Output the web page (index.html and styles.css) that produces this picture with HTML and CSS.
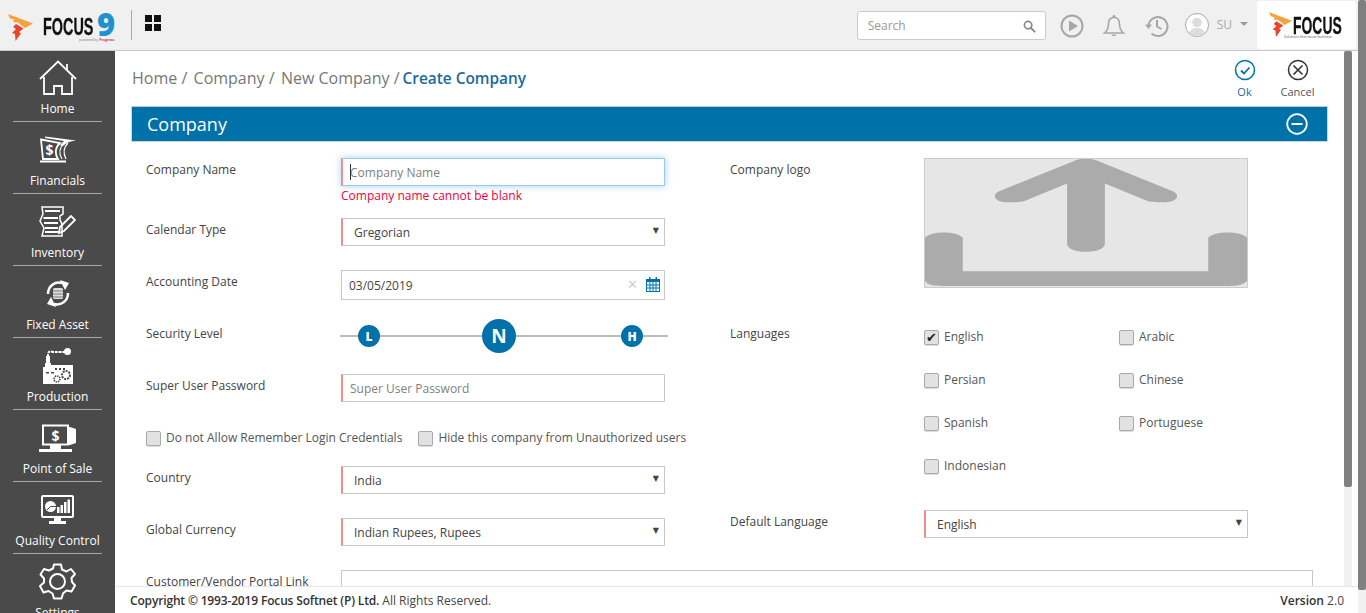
FILE: index.html
```html
<!DOCTYPE html>
<html lang="en">
<head>
    <meta charset="UTF-8">
    <title>Create Company</title>
    <link rel="stylesheet" href="styles.css">
</head>
<body>
<div class="page">
    <header class="topbar">
        <div class="brand">
            <svg class="flame" viewBox="0 0 25 27"><path fill="#f5a23c" d="M0 0L25 9.500L17 14L10 8.500L5 8L6 5.500L2 4.500Z"/><path fill="#e8452a" d="M8 10L15.500 14.500L11 18L13 19.500L7.500 27L7 20L4 19L8 15L5 13Z"/></svg>
            <span class="wordmark">FOCUS</span>
            <span class="nine">9</span>
            <span class="powered">powered by <b>Progress</b></span>
        </div>
        <div class="top-divider"></div>
        <div class="grid-icon"><i></i><i></i><i></i><i></i></div>
        <div class="top-right">
            <div class="search">
                <input type="text" placeholder="Search">
                <svg viewBox="0 0 14 14" width="13" height="13"><circle cx="5.500" cy="5.500" r="4" fill="none" stroke="#888" stroke-width="1.800"/><path d="M8.500 8.500L12.500 12.500" stroke="#888" stroke-width="2.200" stroke-linecap="round"/></svg>
            </div>
            <svg class="top-icon play" viewBox="0 0 24 24" width="24" height="24"><circle cx="12" cy="12" r="10.500" fill="none" stroke="#a6a6a6" stroke-width="2"/><path fill="#a6a6a6" d="M9 6.500L18 12L9 17.500Z"/></svg>
            <svg class="top-icon bell" viewBox="0 0 24 24" width="24" height="24"><path fill="none" stroke="#a6a6a6" stroke-width="1.600" d="M12 3.500C8 3.500 6.500 6.500 6.500 10C6.500 15 5 17 2.500 19H21.500C19 17 17.500 15 17.500 10C17.500 6.500 16 3.500 12 3.500Z"/><circle cx="12" cy="2.500" r="1.500" fill="#a6a6a6"/><path fill="#a6a6a6" d="M9.500 20.500H14.500C14 22.500 10 22.500 9.500 20.500Z"/></svg>
            <svg class="top-icon history" viewBox="0 0 24 24" width="24" height="24"><path fill="none" stroke="#a6a6a6" stroke-width="2" d="M3.500 12A9.500 9.500 0 1 1 6.500 19.500"/><path fill="#a6a6a6" d="M0 10.500H7L3.500 15Z"/><path fill="none" stroke="#a6a6a6" stroke-width="2" d="M12 6V12.500L16.500 15"/></svg>
            <div class="avatar"><svg viewBox="0 0 22 22" width="22" height="22"><circle cx="11" cy="8.500" r="4.800" fill="#ddd"/><path fill="#ddd" d="M3 20C4 14.500 8 14 11 14C14 14 18 14.500 19 20L11 22Z"/></svg></div>
            <span class="user">SU</span>
            <span class="user-caret"></span>
            <div class="brand-box">
                <svg class="flame-small" viewBox="0 0 25 27"><path fill="#f5a23c" d="M0 0L25 9.500L17 14L10 8.500L5 8L6 5.500L2 4.500Z"/><path fill="#e8452a" d="M8 10L15.500 14.500L11 18L13 19.500L7.500 27L7 20L4 19L8 15L5 13Z"/></svg>
                <span class="wordmark wordmark-small">FOCUS</span>
                <span class="tagline">Solutions that move business</span>
            </div>
        </div>
    </header>

    <div class="body-row">
        <nav class="sidebar">
            <a class="nav-item">
                <span class="nav-icon"><svg viewBox="0 0 38 36" width="38" height="36" fill="none" stroke="#fff" stroke-width="1.800"><path d="M1 19L19 1.500L37 19"/><path d="M28 10V4"/><path d="M5 17V34H15V26H23V34H33V17"/></svg></span>
                <span class="nav-label">Home</span>
            </a>
            <a class="nav-item">
                <span class="nav-icon"><svg viewBox="0 0 36 27" width="36" height="27"><path fill="#fff" d="M5 .5L36 4.500C30 5 26 7 23 10L20 9L24 5L5 2Z"/><path fill="none" stroke="#fff" stroke-width="1.800" d="M1 3.500L20 7C15 12 15 18 18 23H3Z"/><path fill="none" stroke="#fff" stroke-width="1.200" d="M24 7C19 12 19 18 22 23M28 7C24 11 23 17 26 23"/><rect y="24.500" width="26" height="2" fill="#fff"/><text x="5.500" y="18.500" class="nav-dollar">$</text></svg></span>
                <span class="nav-label">Financials</span>
            </a>
            <a class="nav-item">
                <span class="nav-icon"><svg viewBox="0 0 37 31" width="37" height="31" fill="none" stroke="#fff" stroke-width="1.500"><path d="M3 1H24V8L21 10V14L23 18V30H3L5 22L1 15L4 8Z"/><path stroke-width="2.200" d="M6 5H21M4.500 12H19M5 17H19M6 22H19M6 26H20"/><path stroke-width="1.800" d="M20 27L21 21L32 10L36 14L25 25Z"/></svg></span>
                <span class="nav-label">Inventory</span>
            </a>
            <a class="nav-item">
                <span class="nav-icon"><svg viewBox="0 0 24 27" width="24" height="27" fill="none" stroke="#fff"><path stroke-width="2.500" d="M2 14C2 6 9 1 16 3"/><path fill="#fff" stroke="none" d="M14 0L23 3L19 10Z"/><path stroke-width="2.500" d="M22 13C22 21 15 26 8 24"/><path fill="#fff" stroke="none" d="M10 27L1 24L5 17Z"/><rect x="7" y="8" width="10" height="11" rx="1.500" fill="#ddd" stroke="none"/><path stroke="#666" stroke-width=".8" d="M7 11H17M7 14H17M7 17H17"/></svg></span>
                <span class="nav-label">Fixed Asset</span>
            </a>
            <a class="nav-item">
                <span class="nav-icon"><svg viewBox="0 0 30 36" width="30" height="36"><path fill="none" stroke="#fff" stroke-width="2" stroke-dasharray="3 .8" d="M5 9V6C5 3 8 3 10 4H22"/><rect x="3" y="8" width="4" height="9" fill="#fff"/><circle cx="24.500" cy="3.500" r="3.500" fill="#fff"/><path fill="#fff" d="M2 15H8V17H30V36H0V19H2Z"/><g fill="#4a4a4a"><rect x="12" y="20" width="2" height="2"/><rect x="16" y="20" width="2" height="2"/><rect x="20" y="20" width="2" height="2"/><rect x="3" y="24" width="3" height="1.500"/><rect x="8" y="24" width="3" height="1.500"/></g><circle cx="23" cy="27" r="4" fill="none" stroke="#4a4a4a" stroke-width="2" stroke-dasharray="2 1"/><circle cx="14" cy="31" r="3" fill="none" stroke="#4a4a4a" stroke-width="1.500" stroke-dasharray="1.500 .8"/></svg></span>
                <span class="nav-label">Production</span>
            </a>
            <a class="nav-item">
                <span class="nav-icon"><svg viewBox="0 0 37 28" width="37" height="28"><path fill="#fff" d="M28 3H31L37 5V19L31 21H28Z"/><rect x="4" y="1.500" width="25" height="19" fill="#4a4a4a" stroke="#fff" stroke-width="2"/><path fill="#fff" d="M11 21H22V25H33V28H0V25H11Z"/><text x="16.500" y="16.500" class="nav-dollar nav-dollar-pos">$</text></svg></span>
                <span class="nav-label">Point of Sale</span>
            </a>
            <a class="nav-item">
                <span class="nav-icon"><svg viewBox="0 0 33 29" width="33" height="29"><rect x="1" y="1" width="31" height="21" rx="1" fill="none" stroke="#fff" stroke-width="2"/><path fill="#fff" d="M13 23H20V26H25V29H8V26H13Z"/><circle cx="9.500" cy="11.500" r="5.500" fill="#fff"/><path stroke="#4a4a4a" d="M9.500 11.500H15M9.500 11.500L6 15" fill="none"/><g fill="#fff"><rect x="16" y="12" width="2.500" height="6"/><rect x="19.500" y="10" width="2.500" height="8"/><rect x="23" y="7" width="2.500" height="11"/><rect x="26.500" y="4.500" width="2.500" height="13.500"/></g></svg></span>
                <span class="nav-label">Quality Control</span>
            </a>
            <a class="nav-item">
                <span class="nav-icon"><svg viewBox="0 0 37 37" width="37" height="37" fill="none" stroke="#fff" stroke-width="2"><circle cx="18.500" cy="18.500" r="7.500"/><path d="M15 1.500H22L23 6.500L27.500 8.500L32 6L36 11L32.500 15L33 19L36 22.500L32.500 28.500L27.500 27.500L24 30.500L22.500 35.500H15L13.500 30.500L9.500 28L4.500 29.500L1 23L5 19.500V15.500L1.500 11.500L5 6L10 7.500L14 5.500Z" stroke-linejoin="round"/></svg></span>
                <span class="nav-label">Settings</span>
            </a>
        </nav>

        <div class="main-col">
            <div class="main-row">
                <main class="content">
                    <div class="toolbar">
                        <div class="crumbs">
                            <span>Home /</span><span>Company /</span><span>New Company /</span><strong>Create Company</strong>
                        </div>
                        <div class="actions">
                            <a class="action ok">
                                <svg viewBox="0 0 22 22" width="22" height="22" fill="none" stroke="#0073aa"><circle cx="11" cy="11" r="9.500" stroke-width="1.500"/><path stroke-width="1.800" d="M7 11.500L10 14.500L15.500 8.500"/></svg>
                                <span>Ok</span>
                            </a>
                            <a class="action cancel">
                                <svg viewBox="0 0 22 22" width="22" height="22" fill="none" stroke="#333"><circle cx="11" cy="11" r="9.500" stroke-width="1.500"/><path stroke-width="1.600" d="M6.500 6.500L15.500 15.500M15.500 6.500L6.500 15.500"/></svg>
                                <span>Cancel</span>
                            </a>
                        </div>
                    </div>

                    <section class="panel">
                        <div class="panel-head">
                            <h2>Company</h2>
                            <svg viewBox="0 0 22 22" width="22" height="22" fill="none" stroke="#fff" stroke-width="1.800"><circle cx="11" cy="11" r="9.800"/><path d="M5.500 11H16.500" stroke-width="2"/></svg>
                        </div>
                        <form class="panel-body">
                            <div class="columns">
                                <div class="col">
                                    <div class="row row-tight">
                                        <label>Company Name</label>
                                        <div class="field">
                                            <div class="caret-wrap">
                                                <input class="input required focused" type="text" placeholder="Company Name">
                                                <span class="caret"></span>
                                            </div>
                                            <div class="error">Company name cannot be blank</div>
                                        </div>
                                    </div>
                                    <div class="row">
                                        <label>Calendar Type</label>
                                        <div class="field select-wrap"><select class="input required select"><option>Gregorian</option></select></div>
                                    </div>
                                    <div class="row row-date">
                                        <label>Accounting Date</label>
                                        <div class="field date-box">
                                            <span class="date-value">03/05/2019</span>
                                            <span class="date-clear">✕</span>
                                            <svg viewBox="0 0 14 15" width="14" height="15"><path fill="#0073aa" d="M0 2H3V0H4.500V2H9.500V0H11V2H14V15H0ZM1 5V14H13V5Z"/><path stroke="#0073aa" d="M1 8H13M1 11H13M4 5V14M7 5V14M10 5V14"/></svg>
                                        </div>
                                    </div>
                                    <div class="row">
                                        <label>Security Level</label>
                                        <div class="slider">
                                            <span class="knob">L</span>
                                            <span class="knob knob-active">N</span>
                                            <span class="knob">H</span>
                                        </div>
                                    </div>
                                    <div class="row">
                                        <label>Super User Password</label>
                                        <div class="field"><input class="input required" type="text" placeholder="Super User Password"></div>
                                    </div>
                                    <div class="row row-checks">
                                        <label class="check"><span class="box"></span>Do not Allow Remember Login Credentials</label>
                                        <label class="check"><span class="box"></span>Hide this company from Unauthorized users</label>
                                    </div>
                                    <div class="row">
                                        <label>Country</label>
                                        <div class="field select-wrap"><select class="input required select"><option>India</option></select></div>
                                    </div>
                                    <div class="row">
                                        <label>Global Currency</label>
                                        <div class="field select-wrap"><select class="input required select"><option>Indian Rupees, Rupees</option></select></div>
                                    </div>
                                </div>

                                <div class="col col-right">
                                    <div class="row row-logo">
                                        <label>Company logo</label>
                                        <div class="logo-drop">
                                            <svg viewBox="0 0 324 130" preserveAspectRatio="none" width="322" height="128"><g fill="#ababab"><path d="M150 2C156 -1 168 -1 174 2L250 33C257 37 254 44 240 44C232 44 227 44 222 42L181 25V86C181 97 143 97 143 86V25L102 42C97 44 92 44 84 44C70 44 67 37 74 33Z"/><path d="M0 80C6 73 32 73 38 80V114H285V80C291 73 318 73 324 80V124C320 128 315 129 305 129H18C8 129 3 128 0 124Z"/></g></svg>
                                        </div>
                                    </div>
                                    <div class="row row-langs">
                                        <label>Languages</label>
                                        <div class="lang-grid">
                                            <label class="check"><span class="box checked">✔</span>English</label>
                                            <label class="check"><span class="box"></span>Arabic</label>
                                            <label class="check"><span class="box"></span>Persian</label>
                                            <label class="check"><span class="box"></span>Chinese</label>
                                            <label class="check"><span class="box"></span>Spanish</label>
                                            <label class="check"><span class="box"></span>Portuguese</label>
                                            <label class="check"><span class="box"></span>Indonesian</label>
                                        </div>
                                    </div>
                                    <div class="row">
                                        <label>Default Language</label>
                                        <div class="field select-wrap"><select class="input required select"><option>English</option></select></div>
                                    </div>
                                </div>
                            </div>
                            <div class="row row-portal">
                                <label>Customer/Vendor Portal Link</label>
                                <div class="field portal-field"><input class="input" type="text"></div>
                            </div>
                        </form>
                    </section>
                </main>
                <div class="scroll inner-scroll"><div class="thumb"></div></div>
            </div>
            <footer class="footer">
                <span><b class="copy">Copyright © 1993-2019 Focus Softnet (P) Ltd.</b> All Rights Reserved.</span>
                <span><b>Version</b> 2.0</span>
            </footer>
        </div>
    </div>
</div>
<div class="scroll outer-scroll"><div class="thumb"></div></div>
</body>
</html>
```

FILE: styles.css
```css
* {
    box-sizing: border-box;
}
html, body {
    height: 100%;
}
body {
    margin: 0;
    display: flex;
    overflow: hidden;
    font-family: "Open Sans", Arial, sans-serif;
    font-size: 12px;
    color: #444;
    background: #fff;
}
.page {
    flex: 1;
    min-width: 0;
    height: 100%;
    display: flex;
    flex-direction: column;
}

/* top bar */
.topbar {
    height: 51px;
    flex: none;
    display: flex;
    align-items: center;
    background: #f0f0f0;
    border-bottom: 1px solid #c9c9c9;
}
.brand {
    position: relative;
    width: 131px;
    height: 50px;
    display: flex;
    align-items: center;
    padding-left: 8px;
}
.flame {
    width: 25px;
    height: 27px;
    margin-top: 5px;
    flex: none;
}
.wordmark {
    display: inline-block;
    font-family: "Liberation Sans", Arial, sans-serif;
    font-weight: 700;
    font-size: 24px;
    line-height: 20px;
    color: #111;
    -webkit-text-stroke: .3px #111;
    transform: scaleX(.6);
    transform-origin: left center;
    margin-left: 10px;
    margin-right: -33px;
    margin-top: 3px;
}
.nine {
    font-family: "Open Sans", sans-serif;
    font-weight: 800;
    font-size: 31px;
    line-height: 24px;
    color: #1d92cf;
    margin-left: 3px;
    margin-top: -2px;
}
.powered {
    position: absolute;
    left: 79px;
    top: 37px;
    font-size: 3.500px;
    white-space: nowrap;
    color: #777;
}
.powered b {
    color: #e0304a;
}
.top-divider {
    width: 1px;
    height: 30px;
    background: #aaa;
}
.grid-icon {
    margin-left: 13px;
    margin-top: -4px;
    display: grid;
    grid-template-columns: 7px 7px;
    gap: 2px;
}
.grid-icon i {
    width: 7px;
    height: 7px;
    background: #111;
}
.top-right {
    margin-left: auto;
    margin-right: 2px;
    display: flex;
    align-items: center;
    height: 50px;
}
.search {
    width: 189px;
    height: 29px;
    display: flex;
    align-items: center;
    padding: 0 9px 0 10px;
    background: #fff;
    border: 1px solid #ccc;
    border-radius: 3px;
}
.search input {
    flex: 1;
    min-width: 0;
    border: 0;
    outline: 0;
    padding: 0;
    font: 12px "Open Sans", sans-serif;
}
.search input::placeholder {
    color: #999;
}
.search svg {
    margin-top: 2px;
}
.top-icon {
    margin-top: 1px;
    flex: none;
}
.play {
    margin-left: 14px;
}
.bell {
    margin-left: 18px;
}
.history {
    margin-left: 19px;
}
.avatar {
    width: 24px;
    height: 24px;
    margin-left: 16px;
    margin-top: -1px;
    border: 1px solid #aaa;
    border-radius: 50%;
    background: #fff;
    overflow: hidden;
}
.avatar svg {
    display: block;
}
.user {
    margin-left: 8px;
    margin-top: -2px;
    color: #aaa;
    font-size: 12px;
}
.user-caret {
    margin-left: 8px;
    margin-top: -2px;
    border-left: 4px solid transparent;
    border-right: 4px solid transparent;
    border-top: 4px solid #999;
}
.brand-box {
    position: relative;
    width: 99px;
    height: 48px;
    margin-left: 9px;
    background: #fff;
    border-radius: 3px;
    display: flex;
    align-items: center;
    padding-left: 12px;
}
.flame-small {
    width: 23px;
    height: 25px;
    margin-top: -2px;
    flex: none;
}
.wordmark-small {
    font-size: 24px;
    line-height: 18px;
    margin-left: 1px;
    margin-top: 1px;
    transform: scaleX(.58);
}
.tagline {
    position: absolute;
    left: 27px;
    top: 33px;
    font-size: 3.500px;
    white-space: nowrap;
    color: #555;
}

.body-row {
    flex: 1;
    min-height: 0;
    display: flex;
}

/* sidebar */
.sidebar {
    width: 115px;
    flex: none;
    overflow: hidden;
    background: #4a4a4a;
}
.nav-item {
    display: block;
    height: 72px;
    margin: 0 13px;
    border-bottom: 1px solid #a8a8a8;
    color: #fff;
    text-align: center;
}
.nav-item:first-child {
    height: 71px;
}
.nav-item:first-child .nav-icon {
    height: 50px;
    padding-top: 4px;
}
.nav-item:first-child .nav-label {
    margin-top: 0;
}
.nav-icon {
    display: flex;
    align-items: center;
    justify-content: center;
    height: 50px;
    padding-top: 5px;
}
.nav-label {
    display: block;
    line-height: 16px;
    font-size: 12px;
    margin: 1px -10px 0;
    white-space: nowrap;
}
.nav-dollar {
    font: 700 14px "Open Sans", sans-serif;
    fill: #fff;
}
.nav-dollar-pos {
    text-anchor: middle;
}

/* main area */
.main-col {
    flex: 1;
    min-width: 0;
    display: flex;
    flex-direction: column;
}
.main-row {
    flex: 1;
    min-height: 0;
    display: flex;
}
.content {
    flex: 1;
    min-width: 0;
    overflow: hidden;
    padding: 0 16px;
}
.toolbar {
    height: 55px;
    display: flex;
    justify-content: space-between;
}
.crumbs {
    display: flex;
    align-items: baseline;
    gap: 5px;
    padding: 16px 0 0 1px;
    font-size: 16px;
    line-height: 22px;
    color: #777;
}
.crumbs span {
    margin-right: 1.300px;
}
.crumbs span:last-of-type {
    margin-right: -2px;
}
.crumbs strong {
    font-size: 15.400px;
    font-weight: 600;
    color: #1b6b9e;
}
.actions {
    display: flex;
    margin-right: 4px;
    padding-top: 8px;
}
.action {
    width: 53px;
    display: flex;
    flex-direction: column;
    align-items: center;
    font-size: 11px;
    line-height: 14px;
    color: #555;
}
.action span {
    margin-top: 4px;
}
.ok span {
    color: #1b6b9e;
}

.panel-head {
    height: 36px;
    display: flex;
    align-items: center;
    justify-content: space-between;
    padding: 0 19px 0 15px;
    background: #0071a9;
    border: 1px solid #d5d5d5;
    border-top-color: #c9c9c9;
    color: #fff;
}
.panel-head h2 {
    margin: 0;
    font-size: 18px;
    font-weight: 400;
}
.panel-body {
    padding: 16px 15px 0;
}
.columns {
    display: flex;
    gap: 65px;
}
.col {
    width: 519px;
    flex: none;
}
.col-right {
    width: 518px;
}
.row {
    display: flex;
    margin-bottom: 24px;
    min-height: 28px;
}
.row > label:not(.check) {
    width: 195px;
    flex: none;
    line-height: 24px;
    color: #444;
}
.col-right .row > label:not(.check) {
    width: 194px;
}
.field {
    flex: 1;
    min-width: 0;
}
.row-tight {
    margin-bottom: 0;
    height: 60px;
}
.input {
    display: block;
    width: 100%;
    height: 28px;
    padding: 0 8px;
    border: 1px solid #c8c8c8;
    border-radius: 0;
    background: #fff;
    outline: 0;
    font: 12px "Open Sans", sans-serif;
    color: #444;
}
.input::placeholder {
    color: #808080;
}
.required {
    border-left: 2px solid #f58c8c;
    padding-left: 7px;
}
.focused {
    border-color: #9cc9ea;
    border-left-color: #f58c8c;
    box-shadow: 0 0 7px rgba(102, 175, 233, .6);
}
.caret-wrap {
    position: relative;
}
.caret {
    position: absolute;
    left: 9px;
    top: 6px;
    width: 1px;
    height: 16px;
    background: #333;
}
.error {
    margin-top: 1px;
    line-height: 17px;
    color: #f2003c;
}
.select {
    appearance: none;
    padding-left: 11px;
}
.select-wrap {
    position: relative;
}
.select-wrap::after {
    content: "▼";
    position: absolute;
    right: 6px;
    top: 6px;
    font-size: 8px;
    line-height: 14px;
    color: #444;
    font-family: "DejaVu Sans", sans-serif;
}
.row-date {
    margin-bottom: 22px;
}
.date-box {
    display: flex;
    align-items: center;
    height: 30px;
    padding: 0 4px 0 7px;
    border: 1px solid #c8c8c8;
}
.date-value {
    flex: 1;
}
.date-clear {
    margin-right: 8px;
    margin-top: -2px;
    font-size: 13px;
    color: #ccc;
    font-family: "DejaVu Sans", sans-serif;
}
.date-box svg {
    margin-top: -2px;
}
.slider {
    position: relative;
    width: 328px;
    flex: none;
    margin-left: -1px;
    height: 28px;
    display: flex;
    align-items: center;
    justify-content: space-between;
    padding: 0 25px 0 18px;
}
.slider::before {
    content: "";
    position: absolute;
    left: 0;
    right: 0;
    top: 13px;
    height: 2px;
    background: #bbb;
}
.knob {
    position: relative;
    width: 22px;
    height: 22px;
    display: flex;
    align-items: center;
    justify-content: center;
    border-radius: 50%;
    background: #0071a9;
    color: #fff;
    font-weight: 800;
    font-size: 12px;
}
.knob-active {
    width: 34px;
    height: 34px;
    font-size: 19px;
    font-weight: 700;
    margin-left: -3px;
}
.row-checks {
    height: 24px;
    min-height: 24px;
    margin-bottom: 16px;
    gap: 16px;
    white-space: nowrap;
}
.check {
    display: flex;
    align-items: flex-start;
    gap: 5px;
    line-height: 14px;
    color: #555;
}
.row-checks .check {
    padding-top: 5px;
}
.box {
    width: 15px;
    height: 15px;
    flex: none;
    display: flex;
    align-items: center;
    justify-content: center;
    background: #e2e2e2;
    border: 1px solid #aaa;
    border-radius: 2px;
    box-shadow: 0 1px 1px rgba(0, 0, 0, .15);
    font-size: 13px;
    color: #222;
    font-family: "DejaVu Sans", sans-serif;
}
.row-logo {
    height: 130px;
    margin-bottom: 34px;
}
.logo-drop {
    width: 324px;
    height: 130px;
    background: #e6e6e6;
    border: 1px solid #ccc;
    overflow: hidden;
}
.logo-drop svg {
    display: block;
    filter: blur(.6px);
}
.row-langs {
    margin-bottom: 16px;
}
.lang-grid {
    flex: 1;
    display: grid;
    grid-template-columns: 195px 1fr;
    grid-auto-rows: 43px;
    height: 172px;
    align-items: start;
}
.lang-grid .check {
    padding-top: 8px;
}
.portal-field {
    width: 972px;
    flex: none;
}

/* footer */
.footer {
    height: 27px;
    flex: none;
    display: flex;
    align-items: center;
    justify-content: space-between;
    padding: 0 14px 0 15px;
    border-top: 1px solid #e6e6e6;
    background: #fff;
    color: #444;
}
.footer b {
    font-weight: 600;
    color: #333;
}
.footer .copy {
    letter-spacing: -.16px;
}

/* scrollbars */
.scroll {
    width: 8px;
    flex: none;
    background: #f1f1f1;
}
.thumb {
    background: #808080;
    border-radius: 2px;
}
.inner-scroll {
    margin-right: 6px;
}
.inner-scroll .thumb {
    height: 436px;
}
.outer-scroll .thumb {
    height: 590px;
}
```
